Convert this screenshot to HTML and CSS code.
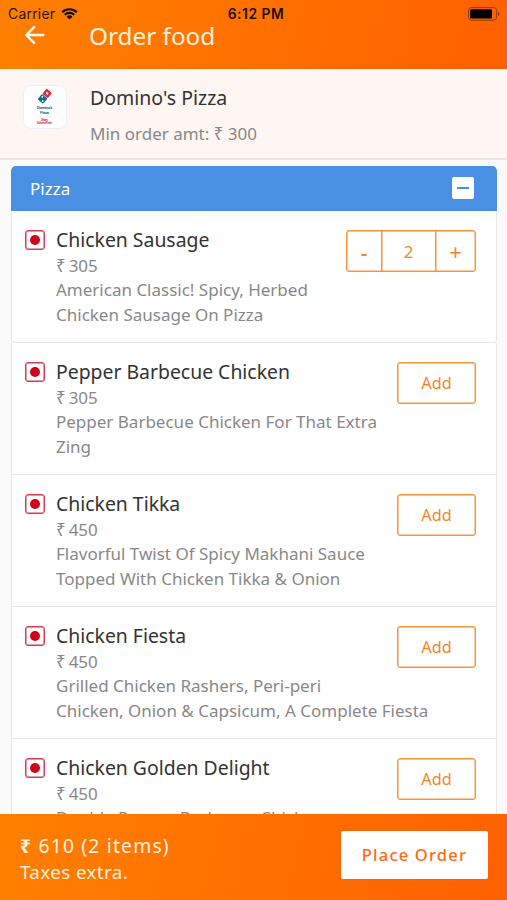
FILE: index.html
```html
<!DOCTYPE html>
<html lang="en">
<head>
<meta charset="utf-8">
<title>Order food</title>
<link rel="stylesheet" href="styles.css">
</head>
<body>
<div class="app">
  <header class="header">
    <div class="status">
      <div class="status-left"><span>Carrier</span>
        <svg class="wifi" viewBox="0 0 17 13" width="17" height="13"><path d="M1.2 5.2a10.4 10.4 0 0 1 14.6 0M3.7 7.8a6.9 6.9 0 0 1 9.6 0" fill="none" stroke="#140a00" stroke-width="2.1"/><path d="M8.5 12.6 5.6 9.8a4.1 4.1 0 0 1 5.8 0z" fill="#140a00"/></svg>
      </div>
      <div class="status-time">6:12 PM</div>
      <svg class="battery" viewBox="0 0 32 14" width="32" height="14"><rect x=".6" y=".6" width="28" height="12.6" rx="3" fill="none" stroke="#8c3c00" stroke-width="1"/><rect x="2.2" y="2.2" width="21.8" height="9.4" rx="1.2" fill="#000"/><path d="M30 4.8v4.2q1.6-.6 1.6-2.1T30 4.8z" fill="#8c3c00"/></svg>
    </div>
    <div class="nav">
      <svg class="back" viewBox="0 0 20 20" width="20" height="20"><path d="M19.3 10H1.6M9.8 1.4 1.3 10l8.5 8.6" fill="none" stroke="#fff" stroke-width="2.3"/></svg>
      <h1 class="title">Order food</h1>
    </div>
  </header>

  <section class="vendor">
    <svg class="logo" viewBox="0 0 44 44" width="44" height="44">
      <rect x=".5" y=".5" width="43" height="43" rx="8" fill="#fff" stroke="#edf0f2"/>
      <g transform="translate(21.7 11.3) rotate(40)"><rect x="-3.6" y="-7.2" width="7.2" height="6.8" rx="1" fill="#df2c45"/><rect x="-3.6" y="0" width="7.2" height="6.8" rx="1" fill="#13698f"/><circle cx="0" cy="-3.8" r="1.2" fill="#fff"/><circle cx="-1.5" cy="2" r=".9" fill="#fff"/><circle cx="1.5" cy="4.8" r=".9" fill="#fff"/></g>
      <g text-anchor="middle" class="logo-text"><text x="21.5" y="24.3" font-size="4.2" fill="#216e91" textLength="15.5">Domino's</text><text x="21.5" y="28.7" font-size="4.2" fill="#216e91" textLength="9">Pizza</text><text x="21.5" y="36.2" font-size="2.6" fill="#dc3853" textLength="7">Delivery</text><text x="21.5" y="39" font-size="2.6" fill="#dc3853" textLength="15">Delivered Fresh</text></g>
      <path d="M14 32.3h15" stroke="#ddd" stroke-width=".5"/>
    </svg>
    <div class="vendor-info">
      <h2 class="vendor-name">Domino's Pizza</h2>
      <p class="vendor-min">Min order amt: ₹ 300</p>
    </div>
  </section>

  <main class="menu">
    <div class="category"><span>Pizza</span><span class="collapse"></span></div>
    <article class="item item-active">
      <span class="mark"></span>
      <div class="info"><h3 class="name">Chicken Sausage</h3><p class="text price">₹ 305</p><p class="text">American Classic! Spicy, Herbed<br>Chicken Sausage On Pizza</p></div>
      <div class="stepper"><span class="step minus">-</span><span class="step count">2</span><span class="step plus">+</span></div>
    </article>
    <article class="item">
      <span class="mark"></span>
      <div class="info"><h3 class="name">Pepper Barbecue Chicken</h3><p class="text price">₹ 305</p><p class="text">Pepper Barbecue Chicken For That Extra<br>Zing</p></div>
      <button class="add">Add</button>
    </article>
    <article class="item">
      <span class="mark"></span>
      <div class="info"><h3 class="name">Chicken Tikka</h3><p class="text price">₹ 450</p><p class="text">Flavorful Twist Of Spicy Makhani Sauce<br>Topped With Chicken Tikka &amp; Onion</p></div>
      <button class="add">Add</button>
    </article>
    <article class="item">
      <span class="mark"></span>
      <div class="info"><h3 class="name">Chicken Fiesta</h3><p class="text price">₹ 450</p><p class="text">Grilled Chicken Rashers, Peri-peri<br>Chicken, Onion &amp; Capsicum, A Complete Fiesta</p></div>
      <button class="add">Add</button>
    </article>
    <article class="item">
      <span class="mark"></span>
      <div class="info"><h3 class="name">Chicken Golden Delight</h3><p class="text price">₹ 450</p><p class="text">Double Pepper Barbecue Chicken</p></div>
      <button class="add">Add</button>
    </article>
  </main>

  <footer class="footer">
    <div class="summary"><p class="total"><b class="rupee">₹</b> 610 (2 items)</p><p class="tax">Taxes extra.</p></div>
    <button class="place">Place Order</button>
  </footer>
</div>
</body>
</html>
```

FILE: styles.css
```css
* { box-sizing: border-box; }
body, h1, h2, h3, p { margin: 0; font-weight: 400; }
body { font-family: "Noto Sans", "Open Sans", sans-serif; color: #333; }
svg { display: block; flex: none; }
.app { height: 900px; display: flex; flex-direction: column; overflow: hidden; background: #fafafb; }

.header { flex: none; height: 69px; background: linear-gradient(105deg, #ff8000, #ff6000); }
.status { height: 27px; padding: 0 7px 0 8px; display: grid; grid-template-columns: 1fr auto 1fr; align-items: center; font-family: Inter, sans-serif; color: #2b1500; }
.status-left { display: flex; align-items: center; gap: 6px; font-size: 13.8px; letter-spacing: .3px; }
.status-time { padding-left: 4px; font-size: 13.8px; font-weight: 600; letter-spacing: .55px; color: #1e0f00; }
.battery { justify-self: end; }
.nav { height: 20px; margin-top: -2px; padding-left: 25px; display: flex; align-items: center; gap: 44px; }
.title { padding-top: 1px; font-size: 24.3px; line-height: 32px; color: #fff0dc; }

.vendor { flex: none; height: 91px; padding: 16px 23px 0; display: flex; gap: 23px; background: #fef6f2; border-bottom: 2px solid #ebe4e1; }
.logo-text { font-weight: 700; }
.vendor-name { font-size: 19.5px; line-height: 26px; }
.vendor-min { margin-top: 10px; font-size: 17px; line-height: 26px; color: #888; }

.menu { flex: 1; min-height: 0; overflow: hidden; padding: 6px 10px 0 11px; }
.category { height: 45px; padding: 0 23px 1px 19px; display: flex; align-items: center; justify-content: space-between; background: #4a90e2; color: #fff; border-radius: 5px 5px 0 0; font-size: 17px; }
.collapse { width: 22px; height: 22px; border-radius: 2px; background: #fff; display: grid; place-items: center; }
.collapse::before { content: ""; width: 12px; height: 2px; background: #4a90e2; }

.item { height: 132px; padding: 15px 20px 0 13px; display: flex; align-items: flex-start; background: #fff; border: 1px solid #e8e8e8; border-top: 0; }
.item-active { border-radius: 0 0 4px 4px; }
.mark { flex: none; width: 20px; height: 20px; margin: 4px 11px 0 0; border: 1px solid #d63b51; border-radius: 3px; box-shadow: inset 0 0 0 .5px #d63b51; display: grid; place-items: center; }
.mark::before { content: ""; width: 10px; height: 10px; border-radius: 50%; background: #d0021b; }
.info { flex: 1; min-width: 0; white-space: nowrap; }
.name { font-size: 19.4px; line-height: 28px; }
.text { font-size: 17px; line-height: 24.4px; color: #888; }
.price { word-spacing: -1.5px; }

button { font-family: inherit; padding: 0; background: #fff; }
.add, .stepper { flex: none; height: 42px; margin-top: 4px; border: 1px solid #f79339; border-radius: 3px; box-shadow: inset 0 0 0 .5px #f79339; color: #f5861f; }
.add { width: 79px; font-size: 16.3px; }
.stepper { width: 130px; display: grid; grid-template-columns: 34px 54px 1fr; font-size: 17px; }
.step { display: grid; place-items: center; }
.step + .step { border-left: 1px solid #f79339; box-shadow: inset .5px 0 #f79339; }
.plus { font-size: 22px; }
.minus { padding-top: 3px; font-size: 20px; font-weight: 600; }

.footer { flex: none; height: 86px; padding: 0 19px 0 20px; display: flex; align-items: center; justify-content: space-between; background: linear-gradient(105deg, #ff8000, #ff6000); color: #fff0dc; }
.summary { padding-top: 3px; }
.total { font-size: 19.3px; line-height: 26px; letter-spacing: 1.2px; }
.rupee { font-weight: 700; }
.tax { font-size: 18.8px; line-height: 26px; letter-spacing: .4px; }
.place { width: 147px; height: 48px; margin-top: -4px; padding-bottom: 2px; border: 0; border-radius: 2px; color: #ff6a13; font-size: 16.5px; font-weight: 500; letter-spacing: 1.2px; }
```
